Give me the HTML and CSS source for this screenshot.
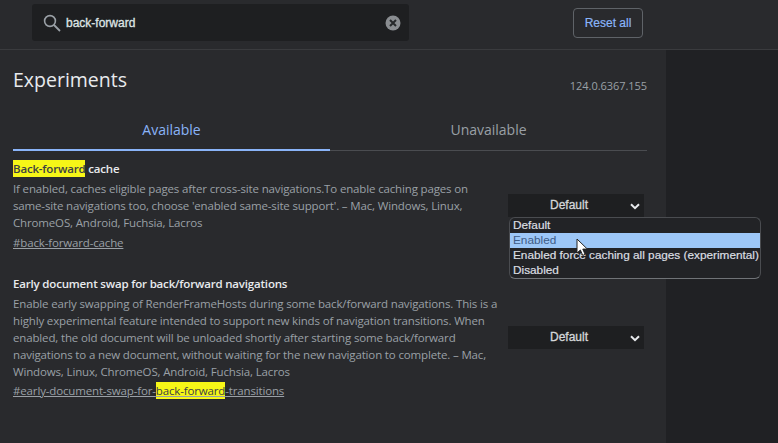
FILE: index.html
```html
<!DOCTYPE html>
<html>
<head>
	<title>Experiments</title>
	<meta charset="utf-8">
	<link rel="stylesheet" href="styles.css">
</head>
<body>
	<div class="top">
		<div class="search">
			<svg class="search__icon" width="18" height="18" viewBox="0 0 18 18"><circle cx="7" cy="7" r="5.4" fill="none" stroke="#9aa0a6" stroke-width="1.6"/><path d="M11 11l6 6" stroke="#9aa0a6" stroke-width="1.8" fill="none"/></svg>
			<span class="search__text">back-forward</span>
			<svg class="search__clear" width="16" height="16" viewBox="0 0 16 16"><circle cx="8" cy="8" r="7.5" fill="#8a8d91"/><path d="M5 5l6 6M11 5l-6 6" stroke="#26282a" stroke-width="2" fill="none"/></svg>
		</div>
		<button class="reset" type="button">Reset all</button>
	</div>

	<div class="page">
		<div class="content">
			<div class="head">
				<h1 class="head__title">Experiments</h1>
				<div class="head__version">124.0.6367.155</div>
			</div>
			<div class="tabs">
				<div class="tabs__tab tabs__tab_active">Available</div>
				<div class="tabs__tab">Unavailable</div>
			</div>

			<div class="flag flag_first">
				<div class="flag__info">
					<h2 class="flag__name"><mark class="hl">Back-forward</mark> cache</h2>
					<p class="flag__text">If enabled, caches eligible pages after cross-site navigations.To enable caching pages on same-site navigations too, choose 'enabled same-site support'. – Mac, Windows, Linux, ChromeOS, Android, Fuchsia, Lacros</p>
					<a class="flag__link">#back-forward-cache</a>
				</div>
				<div class="select">Default<svg class="select__arrow" width="10" height="7" viewBox="0 0 10 7"><path d="M1 1.2l4 4 4-4" fill="none" stroke="#e8eaed" stroke-width="2"/></svg></div>
			</div>

			<div class="flag flag_second">
				<div class="flag__info">
					<h2 class="flag__name">Early document swap for back/forward navigations</h2>
					<p class="flag__text">Enable early swapping of RenderFrameHosts during some back/forward navigations. This is a highly experimental feature intended to support new kinds of navigation transitions. When enabled, the old document will be unloaded shortly after starting some back/forward navigations to a new document, without waiting for the new navigation to complete. – Mac, Windows, Linux, ChromeOS, Android, Fuchsia, Lacros</p>
					<a class="flag__link">#early-document-swap-for-<mark class="hl">back-forward</mark>-transitions</a>
				</div>
				<div class="select">Default<svg class="select__arrow" width="10" height="7" viewBox="0 0 10 7"><path d="M1 1.2l4 4 4-4" fill="none" stroke="#e8eaed" stroke-width="2"/></svg></div>
			</div>
		</div>
		<div class="side"></div>
	</div>

	<div class="menu">
		<div class="menu__item">Default</div>
		<div class="menu__item menu__item_on">Enabled</div>
		<div class="menu__item">Enabled force caching all pages (experimental)</div>
		<div class="menu__item">Disabled</div>
	</div>
	<svg class="cursor" width="13" height="19" viewBox="0 0 13 19"><path d="M1 1v14l3.4-3 2.3 5.4 2.4-1-2.3-5.3h4.6z" fill="#fff" stroke="#222" stroke-width="1"/></svg>
</body>
</html>
```

FILE: styles.css
```css
html, body {
	margin: 0;
	height: 100%;
	overflow: hidden;
}
body {
	background: #292a2d;
	font-family: "Open Sans", "Noto Sans", sans-serif;
	color: #9aa0a6;
}
.top {
	display: flex;
	height: 50px;
	box-sizing: border-box;
	padding: 4px 135px 0 32px;
	justify-content: space-between;
	align-items: flex-start;
	border-bottom: 1px solid #3a3b3e;
}
.search {
	display: flex;
	align-items: center;
	width: 377px;
	height: 37px;
	box-sizing: border-box;
	padding: 0 8px 0 10px;
	background: #1e1f21;
	border-radius: 3px;
}
.search__icon {
	margin: 0 5px 0 1px;
}
.search__text {
	flex: 1;
	font: 12px "Liberation Sans", sans-serif;
	color: #dfe5e5;
	-webkit-text-stroke: 0.3px #dfe5e5;
}
.reset {
	width: 70px;
	height: 30px;
	margin-top: 4px;
	padding: 0;
	background: transparent;
	border: 1px solid #5f6368;
	border-radius: 4px;
	font: 12px "Liberation Sans", sans-serif;
	color: #8ab4f8;
	-webkit-text-stroke: 0.2px #8ab4f8;
}
.page {
	display: flex;
	height: 393px;
}
.content {
	width: 666px;
	box-sizing: border-box;
	padding: 0 19px 0 13px;
}
.side {
	flex: 1;
	background: #202124;
}
.head {
	display: flex;
	justify-content: space-between;
	height: 66px;
	padding-top: 16px;
	box-sizing: border-box;
}
.head__title {
	margin: 0;
	font-size: 19.5px;
	line-height: 28px;
	font-weight: 400;
	color: #e8eaed;
}
.head__version {
	margin-top: 12px;
	font-size: 11px;
	line-height: 16px;
	letter-spacing: -0.05px;
}
.tabs {
	display: flex;
	height: 34px;
	border-bottom: 1px solid #4a4c50;
}
.tabs__tab {
	flex: 1;
	text-align: center;
	font-size: 14px;
	line-height: 28px;
}
.tabs__tab_active {
	color: #8ab4f8;
	height: 33px;
	border-bottom: 2px solid #8ab4f8;
}
.flag {
	display: flex;
	justify-content: space-between;
}
.flag_first {
	margin-top: 9px;
}
.flag_second {
	margin-top: 24px;
}
.flag__info {
	width: 486px;
}
.flag__name {
	margin: 0;
	font-size: 11.5px;
	line-height: 17px;
	font-weight: 600;
	letter-spacing: -0.18px;
	color: #e8eaed;
}
.flag__text {
	margin: 3px 0 0;
	font-size: 11.5px;
	line-height: 17px;
	letter-spacing: -0.15px;
}
.flag__link {
	display: block;
	margin-top: 3px;
	font-size: 11.5px;
	line-height: 17px;
	letter-spacing: -0.15px;
	text-decoration: underline;
}
.flag_second .flag__link {
	margin-top: 2px;
}
.hl {
	padding: 1px 0;
	background: #f6f617;
	color: #3c4043;
}
.select {
	position: relative;
	flex: none;
	width: 122px;
	height: 23px;
	margin: 34px 3px 0 0;
	padding-right: 14px;
	background: #1e1f21;
	text-align: center;
	font: 12px/23px "Liberation Sans", sans-serif;
	color: #d5d7d9;
	-webkit-text-stroke: 0.3px #d5d7d9;
}
.flag_second .select {
	margin-top: 51px;
}
.select__arrow {
	position: absolute;
	right: 4px;
	top: 9px;
}
.menu {
	position: absolute;
	left: 509px;
	top: 217px;
	width: 252px;
	height: 62px;
	box-sizing: border-box;
	background: #222326;
	border: 1px solid #4a4c50;
	border-bottom-color: #707377;
	border-radius: 6px;
	font: 11.8px/15px "Liberation Sans", sans-serif;
	color: #dcdfe2;
	-webkit-text-stroke: 0.2px #dcdfe2;
	overflow: hidden;
}
.menu__item {
	padding-left: 3px;
	white-space: nowrap;
}
.menu__item_on {
	background: #9dc7f7;
	color: #3f5c86;
	-webkit-text-stroke: 0;
}
.cursor {
	position: absolute;
	left: 576px;
	top: 238px;
}
```
